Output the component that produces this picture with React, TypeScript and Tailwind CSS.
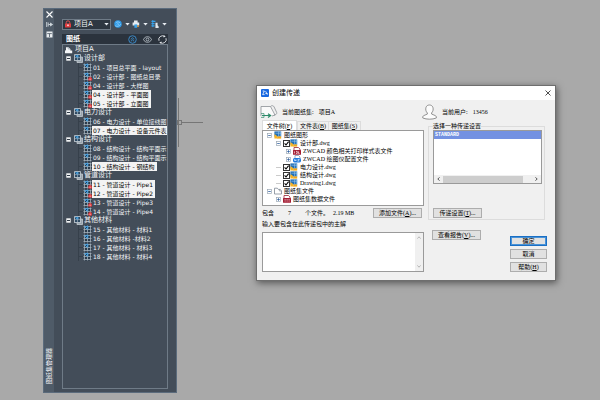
import React, { useState } from "react";

type SheetRow = {
  label: string;
  kind: "root" | "group" | "sheet";
  locked?: boolean;
  selected?: boolean;
};

const SHEETS: SheetRow[] = [
  { label: "项目A", kind: "root" },
  { label: "设计部", kind: "group" },
  { label: "01 - 项目总平面 - layout", kind: "sheet" },
  { label: "02 - 设计部 - 图纸总目录", kind: "sheet", locked: true },
  { label: "04 - 设计部 - 大样图", kind: "sheet", locked: true },
  { label: "04 - 设计部 - 平面图", kind: "sheet", locked: true, selected: true },
  { label: "05 - 设计部 - 立面图", kind: "sheet", locked: true, selected: true },
  { label: "电力设计", kind: "group" },
  { label: "06 - 电力设计 - 单位接线图", kind: "sheet" },
  { label: "07 - 电力设计 - 设备元件表", kind: "sheet", selected: true },
  { label: "结构设计", kind: "group" },
  { label: "08 - 结构设计 - 结构平面示", kind: "sheet" },
  { label: "09 - 结构设计 - 结构平面示", kind: "sheet" },
  { label: "10 - 结构设计 - 钢结构", kind: "sheet", selected: true },
  { label: "管道设计", kind: "group" },
  { label: "11 - 管道设计 - Pipe1", kind: "sheet", locked: true, selected: true },
  { label: "12 - 管道设计 - Pipe2", kind: "sheet", locked: true, selected: true },
  { label: "13 - 管道设计 - Pipe3", kind: "sheet", locked: true },
  { label: "14 - 管道设计 - Pipe4", kind: "sheet", locked: true },
  { label: "其他材料", kind: "group" },
  { label: "15 - 其他材料 - 材料1", kind: "sheet" },
  { label: "16 - 其他材料 -材料2", kind: "sheet" },
  { label: "17 - 其他材料 - 材料3", kind: "sheet" },
  { label: "18 - 其他材料 - 材料4", kind: "sheet" }
];

type FileRow = {
  label: string;
  level: 0 | 1 | 2;
  icon: "dwg" | "style" | "plot" | "folder" | "data";
  toggle?: "plus" | "minus";
  checkable?: boolean;
};

const FILES: FileRow[] = [
  { label: "图纸图形", level: 0, icon: "dwg", toggle: "minus" },
  { label: "设计部.dwg", level: 1, icon: "dwg", toggle: "minus", checkable: true },
  { label: "ZWCAD 颜色相关打印样式表文件", level: 2, icon: "style", toggle: "plus" },
  { label: "ZWCAD 绘图仪配置文件", level: 2, icon: "plot", toggle: "plus" },
  { label: "电力设计.dwg", level: 1, icon: "dwg", checkable: true },
  { label: "结构设计.dwg", level: 1, icon: "dwg", checkable: true },
  { label: "Drawing1.dwg", level: 1, icon: "dwg", checkable: true },
  { label: "图纸集文件", level: 0, icon: "folder", toggle: "minus" },
  { label: "图纸集数据文件", level: 1, icon: "data", toggle: "plus" }
];

const LEVEL_PAD = ["pl-[4px]", "pl-[13px]", "pl-[23px]"];

/* ---------- palette icons ---------- */

function Caret() {
  return (
    <svg viewBox="0 0 5 3" className="w-[5px] h-[3px] shrink-0">
      <path d="M.3 0h4.400L2.500 2.600z" fill="#e8edf2" />
    </svg>
  );
}

function LockIcon() {
  return (
    <svg viewBox="0 0 8 8" className="w-2 h-2 shrink-0">
      <path d="M2.2 4V2.6a1.8 1.8 0 0 1 3.6 0V4" fill="none" stroke="#e05252" strokeWidth="1" />
      <rect x="1" y="3.4" width="6" height="4.2" rx=".5" fill="#e23c3f" />
      <path d="M4 4.6v1.6M3.2 5.2h1.6" stroke="#fff" strokeWidth=".8" />
    </svg>
  );
}

function SheetIcon({ locked }: { locked?: boolean }) {
  return (
    <svg viewBox="0 0 9 9" className="w-[9px] h-[9px] shrink-0">
      <rect x="1" y=".5" width="7.500" height="8" fill="#2a3b4b" />
      <path d="M1.500.5v8M4.500.5v8M7.500.5v8M.5 1.500h8M.5 4.500h8M.5 7.500h8" stroke="#a5b0ba" strokeWidth=".8" />
      <path d="M1.600 1.500l2.800 3M2.600 1.400h2.200v2.400" stroke="#35a0ec" strokeWidth="1" fill="none" />
      {locked && <rect x="5.400" y="6" width="3.400" height="2.600" fill="#e8383a" />}
      {locked && <path d="M6.200 6.200v-1h1.800v1" stroke="#e8383a" strokeWidth=".8" fill="none" />}
      {locked && <path d="M7.100 6.700v1.200" stroke="#fff" strokeWidth=".7" />}
    </svg>
  );
}

function GroupIcon() {
  return (
    <svg viewBox="0 0 9 9" className="w-[9px] h-[9px] shrink-0">
      <path d="M3 3h5.500v5.500H3z" fill="#98a3ad" stroke="#c3cad1" strokeWidth=".8" />
      <rect x=".6" y=".6" width="5.800" height="6" fill="#2d4963" stroke="#c9d1d8" strokeWidth=".8" />
      <path d="M3.500 1v5M1 3.600h5" stroke="#b6c1cb" strokeWidth=".6" />
      <path d="M1.300 1.300l2.400 2.400M2.400 1.400h1.600V3" stroke="#3aa3ea" strokeWidth=".9" fill="none" />
    </svg>
  );
}

function ProjectIcon() {
  return (
    <svg viewBox="0 0 9 8" className="w-[9px] h-2 shrink-0">
      <path d="M1 7.200V4.800l1-.8V1.200h2.400L6.400 3v1.400h1.800v2.800z" fill="#f4f6f8" />
      <path d="M4.2 1.400V3H6" stroke="#8c98a4" strokeWidth=".6" fill="none" />
    </svg>
  );
}

function MinusBox() {
  return (
    <svg viewBox="0 0 5 5" className="w-[5px] h-[5px] shrink-0">
      <rect x=".3" y=".3" width="4.400" height="4.400" fill="#f2f4f6" />
      <path d="M1 2.5h3" stroke="#2f3a46" />
    </svg>
  );
}

function GlobeIcon() {
  return (
    <svg viewBox="0 0 9 9" className="w-2 h-2">
      <circle cx="4.5" cy="4.5" r="4.2" fill="#2f9be8" />
      <path d="M1.4 6.4C3 7.6 6 7.4 7.6 4.8M2 3.2c1.4-1.6 4-1.4 5 .4M3.2 5c.6-1.4 2.4-1 2.2.4" stroke="#bfe3fb" strokeWidth=".7" fill="none" />
    </svg>
  );
}

function PrinterIcon() {
  return (
    <svg viewBox="0 0 8 8" className="w-2 h-2">
      <path d="M2 .4h3.600v2H2zM.6 2.4h6.600v3.2H.6z" fill="#e6ebf0" />
      <path d="M2.400 4.400h2.800v3.400H2.400z" fill="#3aa3ea" />
      <rect x="5.200" y="5.400" width="1.600" height="1.600" fill="#e79a3c" />
    </svg>
  );
}

function PublishIcon() {
  return (
    <svg viewBox="0 0 9 9" className="w-2 h-2">
      <path d="M.5 1.5h4.500M.5 4h3.5M.5 6.5h3.5" stroke="#37a4ee" strokeWidth="1.4" />
      <path d="M2 0v8" stroke="#37a4ee" strokeWidth="1" />
      <path d="M5 3h2.400v3l1.200 1.400V9H5z" fill="#e1e7ec" />
    </svg>
  );
}

/* ---------- dialog icons ---------- */

function ToggleBox({ kind }: { kind?: "plus" | "minus" }) {
  return (
    <svg viewBox="0 0 5 5" className="w-[5px] h-[5px] shrink-0">
      {kind && <rect x=".5" y=".5" width="4" height="4" fill="#fff" stroke="#9aa7b4" strokeWidth=".7" />}
      {kind && <path d={kind === "plus" ? "M1.2 2.5h2.6M2.5 1.2v2.6" : "M1.2 2.5h2.6"} stroke="#2f5f9f" strokeWidth=".8" />}
      {!kind && <path d="M0 2.5h5" stroke="#b4b4b4" strokeWidth=".7" />}
    </svg>
  );
}

function FileIcon({ kind }: { kind: FileRow["icon"] }) {
  if (kind === "folder") {
    return (
      <svg viewBox="0 0 8 8" className="w-2 h-2 shrink-0">
        <path d="M.5 7V1.2h2.8l1 1.2h2L7.5 4v3z" fill="#fff" stroke="#7e8894" strokeWidth=".8" />
        <path d="M5.4 2.4V4h2" stroke="#7e8894" strokeWidth=".6" fill="none" />
      </svg>
    );
  }
  if (kind === "dwg") {
    return (
      <svg viewBox="0 0 8 8" className="w-2 h-2 shrink-0">
        <path d="M.4.4h6.800v5.200H.4z" fill="#1f6db5" />
        <path d="M.4 3.200C2 3.400 3.400 5 4 7.600H.4z" fill="#f5b325" />
        <path d="M4.600.4v4.800M1.400 2.200h5.800M6.400.4v4.800" stroke="#9fcbee" strokeWidth=".6" />
        <path d="M3.400 5.400h3.800v2.200H3.400z" fill="#f2a91c" />
      </svg>
    );
  }
  if (kind === "plot") {
    return (
      <svg viewBox="0 0 8 8" className="w-2 h-2 shrink-0">
        <path d="M2 .5h3.5L7 2v2H2z" fill="#fff" stroke="#6d87a8" strokeWidth=".7" />
        <rect y="3" width="8" height="4.4" rx="1.6" fill="#1e78dc" />
        <path d="M1.6 6V4.4L3 6V4.4M4.6 4.4h1.8L4.6 6h1.8" stroke="#fff" strokeWidth=".6" fill="none" />
      </svg>
    );
  }
  return (
    <svg viewBox="0 0 8 8" className="w-2 h-2 shrink-0">
      <path d="M1 4V.5h4.4L7 2v2" fill="#fff" stroke="#9b2335" strokeWidth=".8" />
      <rect y="3" width="8" height="4.8" rx=".6" fill="#a41d33" />
      <path
        d={kind === "style" ? "M1.4 4.4v2M3 4.4h1.2v2H3M5.4 4.4v2h1.2" : "M1.6 4.6h1M1.6 6h1M3.6 4.6h1M3.6 6h1M5.6 4.6h1M5.6 6h1"}
        stroke="#fff"
        strokeWidth=".7"
        fill="none"
      />
    </svg>
  );
}

function PushButton({ children, className = "border-[#adadad]" }: { children: React.ReactNode; className?: string }) {
  return (
    <button className={`h-[10px] shrink-0 bg-[#e1e1e1] border text-[6px] leading-[8px] text-black text-center whitespace-nowrap ${className}`}>
      {children}
    </button>
  );
}

/* ---------- sheet set palette ---------- */

function SheetRowView({ row }: { row: SheetRow }) {
  if (row.kind === "root") {
    return (
      <li className="h-[9px] flex items-center gap-[2px] pl-[1px] text-[7px] leading-[9px]">
        <ProjectIcon />
        {row.label}
      </li>
    );
  }
  if (row.kind === "group") {
    return (
      <li className="h-[9px] flex items-center gap-[1px] pl-[3px] text-[7px] leading-[9px]">
        <button aria-label="折叠" className="pr-[2px]">
          <MinusBox />
        </button>
        <GroupIcon />
        {row.label}
      </li>
    );
  }
  return (
    <li className="h-[9px] flex items-center pl-[15px]">
      <span className="w-[5px] h-[9px] shrink-0 border-l border-[#36404b] flex items-center">
        <span className="w-full border-t border-[#36404b]" />
      </span>
      <SheetIcon locked={row.locked} />
      <span className={`h-[9px] leading-[9px] pl-[1px] pr-[2px] whitespace-nowrap ${row.selected ? "bg-[#f3f3f3] text-black" : ""}`}>
        {row.label}
      </span>
    </li>
  );
}

function SheetSetPalette() {
  return (
    <section className="absolute left-[43px] top-2 bottom-[7px] w-[134px] flex bg-[#434d59] border border-[#5b6b7c] text-[#f4f6f8] font-['DejaVu_Sans','Noto_Sans_CJK_SC',sans-serif] text-[6px]">
      <div className="w-[10px] shrink-0 bg-[#4f5b68] flex flex-col items-center justify-between pt-[2px] pb-2">
        <div className="flex flex-col items-center gap-[3px]">
          <button aria-label="关闭">
            <svg viewBox="0 0 7 7" className="w-[7px] h-[7px]">
              <path d="M.5.5l6 6M6.5.5l-6 6" stroke="#fff" strokeWidth="1.1" />
            </svg>
          </button>
          <button aria-label="自动隐藏">
            <svg viewBox="0 0 7 7" className="w-[7px] h-[7px]">
              <path d="M.7 1v5M2.2 1.5v4M2.5 3.5h4M4.5 2L6.4 3.5 4.5 5z" stroke="#d3dae0" strokeWidth=".9" fill="none" />
            </svg>
          </button>
          <button aria-label="特性">
            <svg viewBox="0 0 7 7" className="w-[7px] h-[7px]">
              <rect x=".5" y=".5" width="6" height="6" fill="#e8ecef" />
              <path d="M1.2 2.6h4.6M3.5 2.6V6" stroke="#5b6773" strokeWidth=".9" />
            </svg>
          </button>
        </div>
        <span className="rotate-180 [writing-mode:vertical-rl] [text-orientation:sideways] leading-[8px] text-white">图纸集管理器</span>
      </div>

      <div className="flex-1 min-w-0 flex flex-col pl-2 pr-[8px] pt-[9px] pb-[3px]">
        <div className="flex items-center justify-between h-[12px] mb-[4px]">
          <div className="h-[11px] w-[49px] flex items-center gap-[2px] pl-[1px] pr-[1px] bg-[#2e3741] border border-[#6f7b87]">
            <LockIcon />
            <select aria-label="图纸集" className="flex-1 min-w-0 appearance-none bg-transparent text-[7px] leading-[9px] outline-none">
              <option>项目A</option>
            </select>
            <Caret />
          </div>
          <button aria-label="网络" className="flex items-center gap-[3px]">
            <GlobeIcon />
            <Caret />
          </button>
          <button aria-label="打印" className="flex items-center gap-[3px]">
            <PrinterIcon />
            <Caret />
          </button>
          <button aria-label="发布" className="flex items-center gap-[3px] mr-[1px]">
            <PublishIcon />
            <Caret />
          </button>
        </div>

        <div className="h-[10px] shrink-0 flex items-center bg-[#2b333d] pl-[4px] pr-[1px] gap-[6px]">
          <h2 className="flex-1 text-[7px] leading-[10px] font-bold text-white">图纸</h2>
          <button aria-label="展开">
            <svg viewBox="0 0 9 9" className="w-[9px] h-[9px]">
              <circle cx="4.5" cy="4.5" r="3.8" fill="none" stroke="#3c8fd0" strokeWidth=".9" />
              <path d="M2.8 4.4l1.7-1.6 1.7 1.6M2.8 6.4l1.7-1.6 1.7 1.6" stroke="#3c9ae0" strokeWidth=".8" fill="none" />
            </svg>
          </button>
          <button aria-label="预览">
            <svg viewBox="0 0 9 9" className="w-[9px] h-[9px]">
              <path d="M.5 4.5C2 .8 7 .8 8.5 4.5 7 8.200 2 8.200.5 4.500z" fill="none" stroke="#c3cbd3" strokeWidth=".8" />
              <circle cx="4.5" cy="4.5" r="1.4" fill="none" stroke="#c3cbd3" strokeWidth=".8" />
            </svg>
          </button>
          <button aria-label="刷新">
            <svg viewBox="0 0 9 9" className="w-[9px] h-[9px]">
              <path d="M1 5.800A3.700 3.700 0 0 1 6.500 1.400M8 3.200A3.700 3.700 0 0 1 2.500 7.600" fill="none" stroke="#e4e8ec" strokeWidth=".9" />
              <path d="M5.700 0l2 1.600-2.200.9zM3.300 9l-2-1.600 2.200-.9z" fill="#e4e8ec" />
            </svg>
          </button>
        </div>

        <ul className="flex-1 min-h-0 overflow-hidden border border-[#6f7b87]">
          {SHEETS.map((row) => (
            <SheetRowView key={row.label} row={row} />
          ))}
        </ul>
      </div>
    </section>
  );
}

/* ---------- eTransmit dialog ---------- */

function FileRowView({ row }: { row: FileRow }) {
  const [checked, setChecked] = useState(true);

  return (
    <li className={`h-2 flex items-center whitespace-nowrap ${LEVEL_PAD[row.level]}`}>
      <span className="pr-[2px]">
        <ToggleBox kind={row.toggle} />
      </span>
      <label className="flex items-center">
        {row.checkable && (
          <span className="relative w-[7px] h-[7px] shrink-0">
            <input
              type="checkbox"
              checked={checked}
              onChange={(e) => setChecked(e.target.checked)}
              className="block w-[7px] h-[7px] appearance-none bg-white border border-[#333333]"
            />
            {checked && (
              <svg viewBox="0 0 7 7" className="absolute inset-0 w-[7px] h-[7px] pointer-events-none">
                <path d="M1.600 3.400L3 5l2.600-3.400" stroke="#000" strokeWidth="1.100" fill="none" />
              </svg>
            )}
          </span>
        )}
        <FileIcon kind={row.icon} />
        <span className="pl-[2px]">{row.label}</span>
      </label>
    </li>
  );
}

function TransmitDialog() {
  const [note, setNote] = useState("");

  return (
    <section
      role="dialog"
      aria-label="创建传递"
      className="absolute left-[256px] right-[44px] top-[85px] bg-[#f0f0f0] border border-[#6e6e6e] shadow-[1px_2px_7px_rgba(0,0,0,0.5)] text-black text-[6px] leading-[8px] font-['Liberation_Serif','Noto_Sans_CJK_SC',serif]"
    >
      <header className="h-[14px] bg-white flex items-center gap-[3px] pl-[4px] pr-[4px]">
        <svg viewBox="0 0 8 8" className="w-2 h-2">
          <rect width="8" height="8" rx="1" fill="#1767e0" />
          <path d="M1.600 2h1.800L1.600 5.600h2M4.600 2.200l1.800 3.400M4.400 4.600h2.200" stroke="#fff" strokeWidth=".8" fill="none" />
        </svg>
        <h1 className="flex-1 text-[7px] leading-[10px]">创建传递</h1>
        <button aria-label="关闭">
          <svg viewBox="0 0 6 6" className="w-[6px] h-[6px]">
            <path d="M.5.5l5 5M5.500.5l-5 5" stroke="#222" strokeWidth=".8" />
          </svg>
        </button>
      </header>

      <div className="grid grid-cols-[162fr_119fr] gap-x-1 pl-[5px] pr-[8px] pb-[8px]">
        <div className="min-w-0 flex flex-col">
          <div className="h-[20px] flex items-center gap-[2px] pt-[3px]">
            <svg viewBox="0 0 18 15" className="w-[18px] h-[15px] -ml-[2px]">
              <path d="M1 12V2.500h9.500l4.500 8.500-3 1" fill="#fafafa" stroke="#8b9196" strokeWidth=".8" />
              <path d="M10.500 2.500c1.500-1.500 3-.8 3.600.4l2.600 5.600c.4 1.400-1 2.500-2.600 2.500" fill="none" stroke="#8b9196" strokeWidth=".8" />
              <path d="M2 11.500h8M8 9.800l2.600 1.700L8 13.400" stroke="#2e8b6a" strokeWidth="1.200" fill="none" />
              <path d="M1 9.600h3v3.800H1" stroke="#2e8b6a" strokeWidth=".7" fill="none" />
            </svg>
            <span className="pl-[2px]">当前图纸集:</span>
            <span className="pl-[3px]">项目A</span>
          </div>

          <div role="tablist" className="flex items-end h-[10px]">
            <button role="tab" aria-selected="true" className="h-[10px] w-[35px] bg-white border border-b-0 border-[#dcdcdc]">
              文件树(<u>F</u>)
            </button>
            <button role="tab" aria-selected="false" className="h-[9px] w-[32px] border border-b-0 border-[#dcdcdc]">
              文件表(<u>B</u>)
            </button>
            <button role="tab" aria-selected="false" className="h-[9px] w-[32px] border border-b-0 border-l-0 border-[#dcdcdc]">
              图纸集(<u>S</u>)
            </button>
          </div>

          <ul className="bg-white border border-[#9a9a9a] pb-[2px] overflow-hidden">
            {FILES.map((row) => (
              <FileRowView key={row.label} row={row} />
            ))}
          </ul>

          <div className="h-[14px] flex items-center">
            <span className="w-[26px]">包含</span>
            <span className="w-[17px]">7</span>
            <span className="w-[28px]">个文件。</span>
            <span className="flex-1">2.19 MB</span>
            <PushButton className="w-[49px] mr-[2px] border-[#adadad]">
              添加文件(<u>A</u>)...
            </PushButton>
          </div>

          <label htmlFor="note" className="pb-[4px]">
            输入要包含在此传递包中的主解
          </label>
          <div className="h-[40px] flex bg-white border border-[#9a9a9a]">
            <textarea
              id="note"
              value={note}
              onChange={(e) => setNote(e.target.value)}
              className="flex-1 min-w-0 resize-none outline-none overflow-hidden px-[2px]"
            />
            <div className="w-2 bg-[#f0f0f0] flex flex-col items-center justify-between py-[3px]">
              <svg viewBox="0 0 4 3" className="w-[4px] h-[3px]">
                <path d="M.4 2.600L2 .8l1.600 1.800" stroke="#a6a6a6" strokeWidth=".8" fill="none" />
              </svg>
              <svg viewBox="0 0 4 3" className="w-[4px] h-[3px]">
                <path d="M.4.4L2 2.200 3.600.4" stroke="#a6a6a6" strokeWidth=".8" fill="none" />
              </svg>
            </div>
          </div>
        </div>

        <div className="min-w-0 flex flex-col">
          <div className="h-[22px] flex items-center gap-[5px] -ml-[6px] pt-[2px]">
            <svg viewBox="0 0 15 16" className="w-[15px] h-[16px]">
              <path
                d="M5.400 9C3.800 7.600 3.400 5.200 4 3.400 4.800.2 10 .2 10.900 3.400c.6 1.800.2 4.200-1.400 5.600l.2 1.100 3.600 1.500c1 .5 1.300 1.400 1 2.400-4 1.600-9.600 1.600-13.500 0-.3-1 0-1.900 1-2.400l3.500-1.500z"
                fill="#fcfcfc"
                stroke="#777"
                strokeWidth=".8"
              />
            </svg>
            <span>当前用户:</span>
            <span>13456</span>
          </div>

          <fieldset className="min-w-0 mr-[2px] border border-[#dcdcdc] pl-[4px] pr-[2px] pb-[1px]">
            <legend className="h-2">选择一种传递设置</legend>
            <div className="h-[54px] flex flex-col justify-between bg-white border border-[#9a9a9a]">
              <ul role="listbox" aria-label="传递设置">
                <li
                  role="option"
                  aria-selected="true"
                  className="bg-[#7391e2] text-white pl-[1px] text-[5px] font-bold font-['Liberation_Mono',monospace]"
                >
                  STANDARD
                </li>
              </ul>
              <div className="h-2 flex items-center bg-[#f0f0f0] gap-[3px] px-[3px]">
                <svg viewBox="0 0 3 4" className="w-[3px] h-[4px]">
                  <path d="M2.600.4L.8 2l1.800 1.600" stroke="#333" strokeWidth=".8" fill="none" />
                </svg>
                <span className="w-[80px] h-[7px] bg-[#cdcdcd]" />
                <svg viewBox="0 0 3 4" className="w-[3px] h-[4px] ml-auto">
                  <path d="M.4.4L2.200 2 .4 3.600" stroke="#333" strokeWidth=".8" fill="none" />
                </svg>
              </div>
            </div>
            <PushButton className="w-[49px] mt-[24px] block border-[#adadad]">
              传递设置(<u>T</u>)...
            </PushButton>
          </fieldset>

          <div className="flex items-start justify-between pl-[4px] pt-[10px]">
            <PushButton className="w-[49px] border-[#adadad]">
              查看报告(<u>V</u>)...
            </PushButton>
            <div className="flex flex-col gap-[3px] pt-[6px]">
              <PushButton className="w-[37px] border-[#1a6fc4] ring-1 ring-inset ring-[#4a93d8]">确定</PushButton>
              <PushButton className="w-[37px] border-[#adadad]">取消</PushButton>
              <PushButton className="w-[37px] border-[#adadad]">
                帮助(<u>H</u>)
              </PushButton>
            </div>
          </div>
        </div>
      </div>
    </section>
  );
}

export default function App() {
  return (
    <main className="relative min-h-screen overflow-hidden bg-[#a9a9a9]">
      {/* Drawing cursor on the canvas */}
      <svg viewBox="0 0 26 50" className="absolute left-[177px] top-[98px] w-[26px] h-[50px]">
        <path d="M1.500 0v49M4 24.500h22" stroke="#767676" strokeWidth="1" />
        <rect x="0.500" y="22.500" width="4" height="4" fill="none" stroke="#767676" />
      </svg>
      <SheetSetPalette />
      <TransmitDialog />
    </main>
  );
}
